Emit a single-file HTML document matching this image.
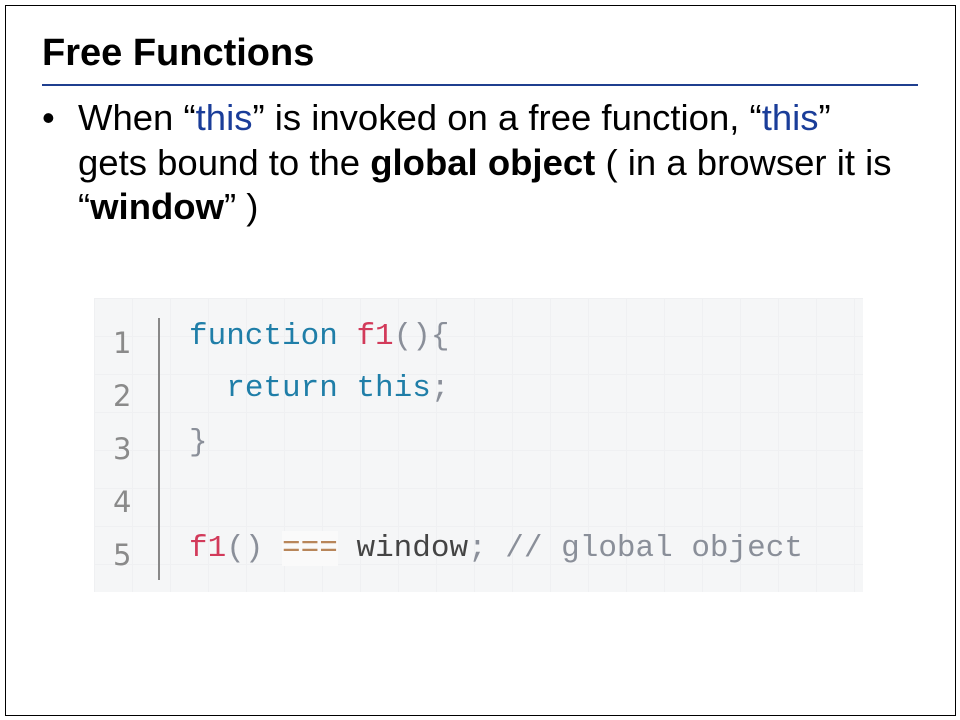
<!DOCTYPE html>
<html><head><style>
body{margin:0;width:960px;height:720px;background:#fff;position:relative;font-family:"Liberation Sans",Arial,sans-serif;overflow:hidden}
.frame{position:absolute;left:5px;top:5px;width:949px;height:709px;border:1px solid #000}
.title{position:absolute;left:42px;top:32px;font-size:38px;font-weight:bold;color:#000}
.rule{position:absolute;left:42px;top:84px;width:876px;height:2px;background:#1f3f8f}
.bullet{position:absolute;left:42px;top:96px;font-size:36.5px;line-height:44.5px;color:#000}
.bullet .b{position:absolute;left:0;top:0}
.bullet .t{margin-left:36px;width:880px;white-space:nowrap}
.bl{color:#1a3d99}
.code{position:absolute;left:94px;top:298px;width:769px;height:294px;background-color:#f5f6f7;
background-image:linear-gradient(#eff0f2 1px,transparent 1px),linear-gradient(90deg,#eff0f2 1px,transparent 1px);background-size:38px 38px}
.gut{position:absolute;left:158px;top:318px;width:2px;height:262px;background:#888}
.ln{position:absolute;left:113px;font-family:"DejaVu Sans",sans-serif;font-size:29px;color:#8a8a8a}
.cl{position:absolute;left:189px;font-family:"Liberation Mono",monospace;font-size:31px;color:#555;white-space:pre}
.k{color:#1f7ea8}.r{color:#d23a5a}.g{color:#8a8f99}.o{color:#b8865a}.w{color:#444}
</style></head><body>
<div class="frame"></div>
<div class="title">Free Functions</div>
<div class="rule"></div>
<div class="bullet"><span class="b">•</span><div class="t">When “<span class="bl">this</span>” is invoked on a free function, “<span class="bl">this</span>”<br>gets bound to the <b>global object</b> ( in a browser it is<br>“<b>window</b>” )</div></div>
<div class="code"></div>
<div class="gut"></div>
<div class="ln" style="top:326px">1</div>
<div class="ln" style="top:379px">2</div>
<div class="ln" style="top:432px">3</div>
<div class="ln" style="top:485px">4</div>
<div class="ln" style="top:538px">5</div>
<div class="cl" style="top:319px"><span class="k">function</span> <span class="r">f1</span><span class="g">(){</span></div>
<div class="cl" style="top:371px">  <span class="k">return this</span><span class="g">;</span></div>
<div class="cl" style="top:425px"><span class="g">}</span></div>
<div class="cl" style="top:531px"><span class="r">f1</span><span class="g">()</span> <span class="o" style="background:#fafafa">===</span> <span class="w">window</span><span class="g">; // global object</span></div>
</body></html>
